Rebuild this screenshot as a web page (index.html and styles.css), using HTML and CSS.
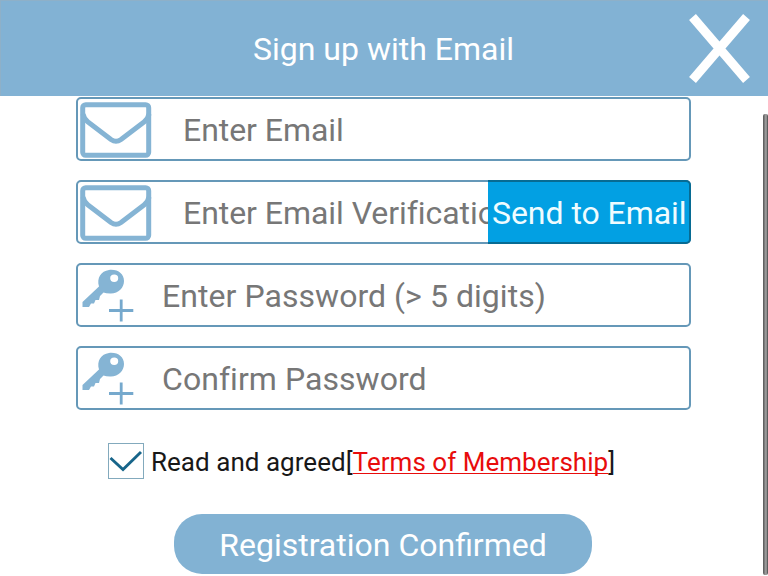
FILE: index.html
```html
<!DOCTYPE html>
<html lang="en">
<head>
<meta charset="utf-8">
<title>Sign up with Email</title>
<link rel="stylesheet" href="styles.css">
</head>
<body>
<svg class="symbols" aria-hidden="true">
  <symbol id="mail" viewBox="0 0 72 56">
    <g fill="none" stroke="#85b4d4" stroke-width="5">
      <rect x="2.7" y="2.7" width="66" height="50.6" rx="3"/>
      <path d="M3 12 Q4 17 8 20 L31 37.5 Q36 41 41 37.5 L64 20 Q68 17 69 12"/>
    </g>
  </symbol>
  <symbol id="key" viewBox="0 0 54 54">
    <path fill="#85b4d4" fill-rule="evenodd" d="M28 1 C37 0 43 5 43 12 C43 19 37 25 29 24.500 Q25 24.500 22.500 23.500 L19 27 L18 31 L14.500 31 L13 34.500 L10 34.500 L8 38 L1.500 38 L1.500 33 L18 17.500 C15.500 9 20 2 28 1 Z M33.200 5.500 A4 3.700 0 1 0 33.200 12.900 A4 3.700 0 1 0 33.200 5.500 Z"/>
    <path fill="none" stroke="#76a9cd" stroke-width="2.800" d="M28 41.500 H52.300 M40.200 30.500 V52.500"/>
  </symbol>
</svg>
<header class="header">
  <h1 class="title">Sign up with Email</h1>
  <svg class="close" viewBox="0 0 64 70"><path d="M5.500 4 L59.500 67 M59.500 4 L5.500 67" stroke="#fff" stroke-width="9" fill="none"/></svg>
</header>
<main class="form">
  <div class="field">
    <svg class="mail"><use href="#mail"/></svg>
    <span class="hint">Enter Email</span>
  </div>
  <div class="field">
    <svg class="mail"><use href="#mail"/></svg>
    <span class="hint clipped">Enter Email Verification</span>
    <span class="send">Send to Email</span>
  </div>
  <div class="field">
    <svg class="key"><use href="#key"/></svg>
    <span class="hint password">Enter Password (&gt; 5 digits)</span>
  </div>
  <div class="field">
    <svg class="key"><use href="#key"/></svg>
    <span class="hint password">Confirm Password</span>
  </div>
  <div class="agree">
    <span class="check"><svg viewBox="0 0 34 34"><path d="M1.500 14 L14 25.500 L32 8" fill="none" stroke="#17658a" stroke-width="2.900"/></svg></span>
    <span class="terms">Read and agreed[<a class="link">Terms of Membership</a>]</span>
  </div>
  <div class="confirm">Registration Confirmed</div>
</main>
<div class="scrollbar"></div>
</body>
</html>
```
FILE: styles.css
```css
* { box-sizing: border-box; }
body {
  margin: 0;
  width: 768px;
  height: 576px;
  overflow: hidden;
  background: #fff;
  font-family: Roboto, "Liberation Sans", sans-serif;
  font-size: 32px;
}
.symbols { position: absolute; width: 0; height: 0; }
.header {
  position: relative;
  display: flex;
  align-items: center;
  justify-content: center;
  height: 96px;
  background: #82b2d4;
  border: 1px solid #8eb0c8;
  border-width: 1px 0 0 1px;
}
.title {
  margin: 0;
  padding: 1px 2px 0 0;
  font-size: 32px;
  font-weight: 400;
  color: #fff;
}
.close { position: absolute; right: 17px; top: 12px; width: 64px; height: 70px; }
.form {
  display: flex;
  flex-direction: column;
  gap: 19px;
  width: 615px;
  margin: 1px 0 0 76px;
}
.field {
  position: relative;
  display: flex;
  align-items: center;
  height: 64px;
  border: 2px solid #6598b8;
  border-radius: 5px;
  white-space: nowrap;
}
.mail { flex: none; width: 72px; height: 56px; margin: 1px 31px 0 2px; }
.key { flex: none; width: 54px; height: 54px; margin: 1px 27px 0 3px; }
.hint { color: #777; padding-top: 1px; letter-spacing: -0.05px; }
.password { letter-spacing: 0.05px; }
.clipped { width: 305px; overflow: hidden; }
.send {
  position: absolute;
  top: -2px;
  right: -2px;
  width: 203px;
  height: 64px;
  padding-left: 4px;
  line-height: 62px;
  letter-spacing: -0.05px;
  color: #effcff;
  background: #02a0e3;
  border: 2px solid #076b93;
  border-left: 0;
  border-radius: 0 5px 5px 0;
}
.agree {
  display: flex;
  align-items: center;
  height: 36px;
  margin: 14px 0 0 32px;
  font-size: 26px;
  letter-spacing: 0.03px;
  color: #181818;
  white-space: nowrap;
}
.check {
  width: 36px;
  height: 36px;
  margin-right: 7px;
  border: 1px solid #83aabd;
}
.check svg { display: block; }
.terms { padding-top: 2px; }
.link { color: #e80c0c; text-decoration: underline; text-decoration-thickness: 1px; text-underline-offset: 2px; text-decoration-skip-ink: none; }
.confirm {
  display: flex;
  align-items: center;
  justify-content: center;
  width: 418px;
  height: 60px;
  margin: 16px 0 0 98px;
  padding-top: 2px;
  border-radius: 28px;
  background: #82b2d3;
  color: #fff;
}
.scrollbar {
  position: absolute;
  left: 763px;
  top: 114px;
  width: 5px;
  height: 461px;
  border-radius: 2px;
  background: linear-gradient(90deg, #555, #888 40%, #aaa 60%, #444);
}
```
